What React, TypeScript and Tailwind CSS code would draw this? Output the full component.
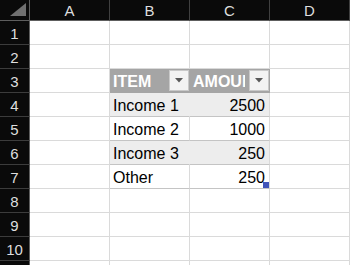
import React from 'react';

const cols = ['A', 'B', 'C', 'D'];

type Row = { item?: string; amount?: string; kind?: 'head' | 'band' | 'plain' | 'last' };

const rows: Row[] = [
  {},
  {},
  { item: 'ITEM', amount: 'AMOUNT', kind: 'head' },
  { item: 'Income 1', amount: '2500', kind: 'band' },
  { item: 'Income 2', amount: '1000', kind: 'plain' },
  { item: 'Income 3', amount: '250', kind: 'band' },
  { item: 'Other', amount: '250', kind: 'last' },
  {},
  {},
  {},
  {},
];

function FilterButton() {
  return (
    <div className="absolute right-0 top-[1px] flex h-[21px] w-[20px] items-center justify-center border border-[#c9c9c9] bg-[#f3f3f3]">
      <svg width="8" height="5" viewBox="0 0 8 5">
        <path d="M0 0 H8 L4 4.5 Z" fill="#595959" />
      </svg>
    </div>
  );
}

function TableCell({ row, col }: { row: Row; col: number }) {
  const text = col === 1 ? row.item : row.amount;
  const right = col === 2;

  if (row.kind === 'head') {
    return (
      <div className="relative h-[24px] w-[80px] border-r border-b border-[#a5a5a5] bg-[#a5a5a5]">
        <div className="h-full w-[55px] overflow-hidden whitespace-nowrap pl-[3px] pt-[2px] text-[16px] font-bold leading-[21px] text-white">
          {text}
        </div>
        <FilterButton />
      </div>
    );
  }

  const bg = row.kind === 'band' ? 'bg-[#ededed]' : 'bg-white';
  const borderR = row.kind === 'band' && col === 1 ? 'border-r-[#ededed]' : 'border-r-[#dadada]';

  return (
    <div
      className={`relative h-[24px] w-[80px] border-r border-b border-b-[#c4c4c4] ${borderR} ${bg} ${
        right ? 'pr-[4px] text-right' : 'pl-[3px]'
      } whitespace-nowrap pt-[2px] text-[16px] leading-[21px] text-black`}
    >
      {text}
      {row.kind === 'last' && right && <span className="absolute right-0 bottom-0 h-[6px] w-[6px] bg-[#4154b9]" />}
    </div>
  );
}

export default function App() {
  return (
    <div className="h-[265px] w-[350px] overflow-hidden bg-white font-['Liberation_Sans',Arial,sans-serif]">
      {/* column headers */}
      <div className="flex h-[21px]">
        <div className="relative h-full w-[30px] shrink-0 border-r border-b border-[#5e5e5e] bg-[#0a0a0a]">
          <svg className="absolute left-0 top-0" width="29" height="20" viewBox="0 0 29 20">
            <path d="M10 16 H26 V3 Z" fill="#707070" />
          </svg>
        </div>
        {cols.map((c) => (
          <div
            key={c}
            className="flex h-full w-[80px] shrink-0 items-center justify-center border-r border-r-[#404040] border-b border-b-[#5e5e5e] bg-[#0a0a0a] text-[15px] leading-none text-[#dedede]"
          >
            {c}
          </div>
        ))}
      </div>

      {rows.map((row, i) => (
        <div key={i} className="flex h-[24px]">
          <div className="flex h-full w-[30px] shrink-0 items-center justify-center border-r border-r-[#5e5e5e] border-b border-b-[#3c3c3c] bg-[#0a0a0a] pt-[2px] text-[15px] leading-none text-[#dedede]">
            {i + 1}
          </div>
          {cols.map((c, ci) =>
            row.kind && (ci === 1 || ci === 2) ? (
              <TableCell key={c} row={row} col={ci} />
            ) : (
              <div key={c} className="h-full w-[80px] shrink-0 border-r border-b border-[#dadada] bg-white" />
            )
          )}
        </div>
      ))}
    </div>
  );
}
